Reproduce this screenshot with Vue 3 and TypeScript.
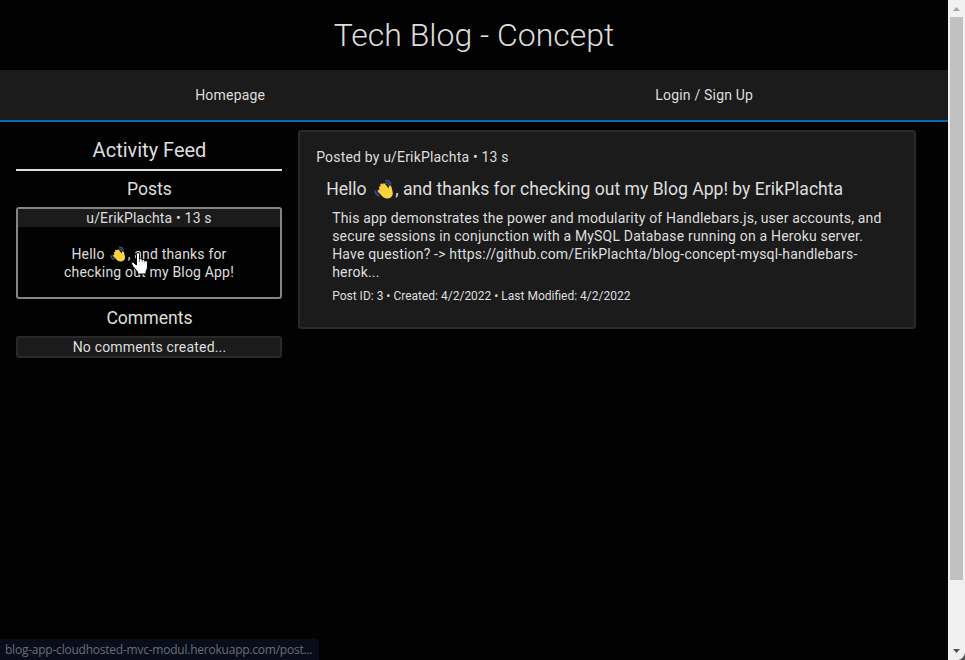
<script setup lang="ts">
interface Post {
  id: number
  author: string
  age: string
  created: string
  modified: string
  lines: string[]
}

const post: Post = {
  id: 3,
  author: 'ErikPlachta',
  age: '13 s',
  created: '4/2/2022',
  modified: '4/2/2022',
  lines: [
    'This app demonstrates the power and modularity of Handlebars.js, user accounts, and',
    'secure sessions in conjunction with a MySQL Database running on a Heroku server.',
    'Have question? -> https://github.com/ErikPlachta/blog-concept-mysql-handlebars-',
    'herok...',
  ],
}
const links: string[] = ['Homepage', 'Login / Sign Up']
</script>

<template>
  <svg class="defs" width="0" height="0" aria-hidden="true">
    <symbol id="wave" viewBox="0 0 20 20">
      <g fill="none" stroke="#35567c" stroke-width="1.7" stroke-linecap="round">
        <path d="M12 1.5c2.3 0 3.9 1.2 4.5 3.4" />
        <path d="M12 4c1.400 0 2.300.7 2.800 2" />
        <path d="M1.200 12.200c.2 2.300 1.400 3.800 3.600 4.400M3.600 11.500c.1 1.400.8 2.300 2 2.800" />
      </g>
      <path fill="#ffd33d" d="M5.2 8.7c-.6-1.1.7-2 1.5-1.2L6.400 6c-.4-1.300 1.200-2 2-.9l.5.6c-.1-1.400 1.400-1.800 2.200-.7l3.400 4.200.5-1.800c.3-1.300 2.200-1 2.400.3l1.300 5.500c.6 3-1.100 5.300-3.800 6-2.800.7-5.300-.2-6.900-2.200l-3.900-4.500c-.7-1 .4-1.900 1.200-1.300z" />
      <path fill="none" stroke="#f0ac2c" stroke-width=".4" d="M6.700 7.500l2.800 3.500M8.900 5.700l2.700 3.700M6.600 11.300l1.600 1.900" />
    </symbol>
  </svg>
  <div class="window">
    <div class="page">
      <header><h1>Tech Blog - Concept</h1></header>
      <nav><a v-for="link in links" :key="link">{{ link }}</a></nav>
      <div class="content">
        <aside>
          <h2>Activity Feed</h2>
          <h3>Posts</h3>
          <div class="feed-post">
            <div class="feed-head">u/{{ post.author }} • {{ post.age }}</div>
            <div class="feed-body">
              <div class="line">Hello <svg class="wave small"><use href="#wave" /></svg>, and thanks for</div>
              <div class="line">checking out my Blog App!</div>
            </div>
          </div>
          <h3 class="comments-title">Comments</h3>
          <div class="empty">No comments created...</div>
        </aside>
        <main>
          <article>
            <div class="byline">Posted by u/{{ post.author }} • {{ post.age }}</div>
            <h4>Hello <svg class="wave"><use href="#wave" /></svg>, and thanks for checking out my Blog App! by {{ post.author }}</h4>
            <div class="text">
              <div v-for="(line, i) in post.lines" :key="i">{{ line }}</div>
            </div>
            <div class="meta">Post ID: {{ post.id }} • Created: {{ post.created }} • Last Modified: {{ post.modified }}</div>
          </article>
        </main>
      </div>
    </div>
    <div class="scrollbar">
      <svg class="arrow" viewBox="0 0 17 17"><path fill="#a3a3a3" d="M5 11l3.500-4 3.500 4z" /></svg>
      <div class="thumb"></div>
      <svg class="arrow down" viewBox="0 0 17 17"><path fill="#505050" d="M5 6l3.500 4L12 6z" /></svg>
    </div>
    <div class="status">blog-app-cloudhosted-mvc-modul.herokuapp.com/post...</div>
    <svg class="corner" viewBox="0 0 7 7"><path fill="#555" d="M7 0v7H0c3.500-.5 6-3 7-7z" /></svg>
    <svg class="cursor" viewBox="0 0 17 23">
      <path fill="#fff" stroke="#000" stroke-width="1" d="M5.500 13V2.500c0-2.500 3-2.500 3 0V7c1-.8 2.500-.3 2.700.8 1-.6 2.300 0 2.500 1 1.300-.5 2.800.2 2.800 1.700V15c0 2-1.500 3.500-1.500 5v2H6.500v-2L2 14.500C-.5 11 .5 9.500 2.500 10.500z" />
      <path stroke="#000" stroke-width=".5" d="M8.500 7v3M11.200 8v2M13.700 9v1.500" />
    </svg>
  </div>
</template>

<style>
body { background: #020202; overflow: hidden; }
</style>

<style scoped>
.window { position: relative; display: flex; width: 965px; height: 660px; overflow: hidden; background: #020202; color: #dedede; font: 14px/18px Roboto, "Liberation Sans", sans-serif; letter-spacing: .18px; }
.defs { position: absolute; }
.page { width: 948px; }
h1, h2, h3, h4 { margin: 0; font-weight: 400; letter-spacing: 0; }
header { height: 70px; }
h1 { font-size: 32px; line-height: 70px; font-weight: 300; text-align: center; }
nav { box-sizing: border-box; height: 52px; display: flex; background: #1b1b1b; border-bottom: 2px solid #0868ad; letter-spacing: .2px; }
nav a { flex: none; text-align: center; line-height: 50px; }
nav a:first-child { width: 460.4px; }
nav a:last-child { width: 487.6px; }
.content { display: flex; padding: 8px 32px 0 16px; gap: 16px; }
aside { flex: none; width: 266px; text-align: center; }
h2 { height: 39px; padding-left: 1px; border-bottom: 2px solid #dedede; font-size: 20px; line-height: 40px; }
h3 { height: 36px; padding-left: 1px; line-height: 36px; font-size: 17.6px; }
.feed-post { box-sizing: border-box; height: 92px; border: 2px solid #858585; border-radius: 3px; }
.feed-head { height: 18px; background: #1b1b1b; }
.feed-body { padding-top: 18px; }
.line { white-space: nowrap; }
.comments-title { height: 37px; line-height: 38px; }
.empty { height: 18px; padding-left: 1px; border: 2px solid #292929; background: #1b1b1b; border-radius: 3px; }
main { flex: none; width: 618px; }
article { box-sizing: border-box; height: 199px; padding: 16px 16px 16px 16.2px; border: 2px solid #292929; border-radius: 3px; background: #1b1b1b; white-space: nowrap; }
h4 { padding: 10px 0 0 10px; font-size: 17.6px; line-height: 26px; }
.text { padding: 7px 0 0 16px; }
.meta { padding: 6px 0 0 16px; font-size: 12px; letter-spacing: 0; }
.wave { width: 20px; height: 20px; vertical-align: -4px; margin: 0 1.3px 0 2.800px; }
.small { width: 16px; height: 16px; vertical-align: -3px; margin: 0 1.800px 0 1.700px; }
.scrollbar { width: 17px; display: flex; flex-direction: column; background: #f1f1f1; }
.arrow { width: 17px; height: 17px; }
.down { margin-top: auto; }
.thumb { width: 13px; height: 563px; margin-left: 2px; background: #c1c1c1; }
.status { position: absolute; left: 0; bottom: 0; box-sizing: border-box; width: 319px; height: 21px; padding-left: 5px; border-radius: 0 4px 0 0; background: #070d1a; color: #6b6e73; font: 12px/21px "Open Sans", "Noto Sans", sans-serif; letter-spacing: -.23px; white-space: nowrap; }
.cursor { position: absolute; left: 131px; top: 252px; width: 17px; height: 23px; }
.corner { position: absolute; right: 0; bottom: 0; width: 7px; height: 7px; }
</style>
